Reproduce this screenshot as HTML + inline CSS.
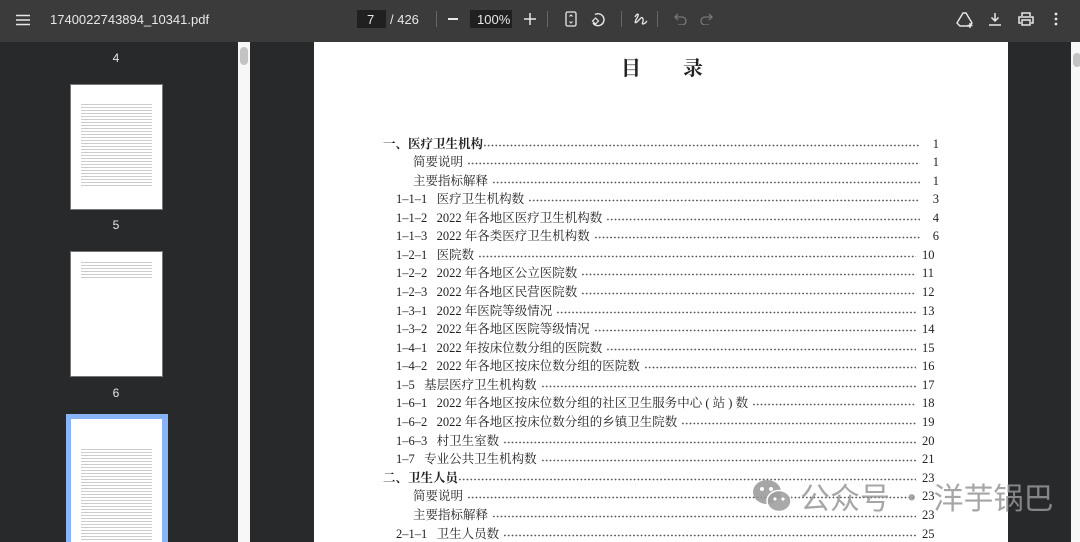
<!DOCTYPE html>
<html><head><meta charset="utf-8"><style>
*{margin:0;padding:0;box-sizing:border-box}
html,body{width:1080px;height:542px;overflow:hidden}
body{background:#28292b;font-family:"Liberation Sans",sans-serif;position:relative}
.tb{position:absolute;left:0;top:0;width:1080px;height:42px;background:#3b3b3b;color:#e8e8e8;font-size:13px}
.tb .t{position:absolute;top:12px}
.ic{position:absolute;top:11px}
.side{position:absolute;left:0;top:42px;width:238px;height:500px;background:#28292b}
.sb{position:absolute;left:238px;top:42px;width:12px;height:500px;background:#f7f7f7}
.sb i{position:absolute;left:2px;top:5px;width:8px;height:18px;border-radius:4px;background:#c3c3c3}
.rsb{position:absolute;left:1071px;top:42px;width:9px;height:500px;background:#f7f7f7}
.rsb i{position:absolute;left:2px;top:11px;width:8px;height:14px;border-radius:4px;background:#c3c3c3}
.lbl{position:absolute;color:#e8e8e8;font-size:12px;width:30px;text-align:center}
.th{position:absolute;background:#fff;border:1px solid #777}
.page{position:absolute;left:314px;top:42px;width:694px;height:500px;background:#fff;font-family:"Liberation Serif","Noto Serif CJK SC",serif;color:#222}
.title{position:absolute;left:307px;top:10px;font-size:20px;letter-spacing:42px;font-weight:bold;font-family:"Noto Serif CJK SC",serif}
.r{position:absolute;height:18px;display:flex;align-items:flex-end;font-size:12.5px;line-height:18px;right:69px}
.r .d{flex:1;height:5px;margin:0 5px 5px 4px;background:radial-gradient(circle,#555 0.7px,transparent 1px) 0 0/3.8px 5px repeat-x}
.r .n{width:14px;text-align:right}
.r .n2{width:18px;text-align:left;padding-left:1px}
.wm{position:absolute;left:752px;top:476px;color:rgba(150,150,150,.85);font-family:"Noto Sans CJK SC",sans-serif;font-size:30px;line-height:40px}
</style></head><body>
<div class="tb">
<svg class="ic" style="left:16px;top:14px" width="14" height="12"><path d="M0 1.5h14M0 6h14M0 10.5h14" stroke="#e8e8e8" stroke-width="1.5"/></svg>
<div class="t" style="left:50px">1740022743894_10341.pdf</div>
<div style="position:absolute;left:357px;top:10px;width:29px;height:18px;background:#202020"></div>
<div class="t" style="left:367px">7</div>
<div class="t" style="left:390px">/ 426</div>
<div style="position:absolute;left:436px;top:11px;width:1px;height:16px;background:#666"></div>
<div style="position:absolute;left:448px;top:18px;width:10px;height:1.5px;background:#e8e8e8"></div>
<div style="position:absolute;left:470px;top:10px;width:42px;height:18px;background:#202020"></div>
<div class="t" style="left:477px">100%</div>
<svg class="ic" style="left:524px;top:13px" width="12" height="12"><path d="M6 0v12M0 6h12" stroke="#e8e8e8" stroke-width="1.5"/></svg>
<div style="position:absolute;left:547px;top:11px;width:1px;height:16px;background:#666"></div>
<svg class="ic" style="left:565px" width="12" height="16"><rect x="1" y="1" width="10" height="14" rx="1.5" fill="none" stroke="#e8e8e8" stroke-width="1.3"/><path d="M4.5 5.5l1.5-1.5 1.5 1.5M4.5 10.5l1.5 1.5 1.5-1.5" stroke="#e8e8e8" fill="none"/></svg>
<svg class="ic" style="left:590px" width="16" height="16"><path d="M5 3.5A6 6 0 1 1 3 12" fill="none" stroke="#e8e8e8" stroke-width="1.4"/><path d="M5.5 7L2.5 10 5.5 13 8.5 10z" fill="none" stroke="#e8e8e8" stroke-width="1.2"/></svg>
<div style="position:absolute;left:621px;top:11px;width:1px;height:16px;background:#666"></div>
<svg class="ic" style="left:633px" width="16" height="16"><path d="M2 6c2-4 5-4 2 1s-2 6 1 3 4-5 5-2-2 5 0 5 3-2 4-3" fill="none" stroke="#e8e8e8" stroke-width="1.3"/></svg>
<div style="position:absolute;left:657px;top:11px;width:1px;height:16px;background:#666"></div>
<svg class="ic" style="left:674px;top:13px" width="13" height="12"><path d="M4 1L1 4l3 3M1 4h7a4 4 0 0 1 0 8H4" fill="none" stroke="#777" stroke-width="1.3"/></svg>
<svg class="ic" style="left:700px;top:13px" width="13" height="12"><path d="M9 1l3 3-3 3M12 4H5a4 4 0 0 0 0 8h4" fill="none" stroke="#777" stroke-width="1.3"/></svg>
<svg class="ic" style="left:956px" width="18" height="18"><path d="M7 2h3l6 10-2 3H4L1 12z" fill="none" stroke="#e8e8e8" stroke-width="1.4"/><path d="M14 12v5M11.5 14.5h5" stroke="#e8e8e8" stroke-width="1.4"/></svg>
<svg class="ic" style="left:988px;top:12px" width="14" height="14"><path d="M7 1v8M3.5 5.5L7 9l3.5-3.5M1 13h12" fill="none" stroke="#e8e8e8" stroke-width="1.5"/></svg>
<svg class="ic" style="left:1018px;top:12px" width="16" height="14"><path d="M4 4V1h8v3M3 11H1V5h14v6h-2M4 8h8v5H4z" fill="none" stroke="#e8e8e8" stroke-width="1.5"/></svg>
<svg class="ic" style="left:1054px;top:12px" width="4" height="14"><circle cx="2" cy="2" r="1.4" fill="#e8e8e8"/><circle cx="2" cy="7" r="1.4" fill="#e8e8e8"/><circle cx="2" cy="12" r="1.4" fill="#e8e8e8"/></svg>
</div>
<div class="side">
<div class="lbl" style="left:101px;top:9px">4</div>
<div class="th" style="left:70px;top:42px;width:93px;height:126px"><div style="margin:17px 10px 0;height:85px;background:repeating-linear-gradient(#fff 0 2px,#ccc 2px 3px)"></div></div>
<div class="lbl" style="left:101px;top:176px">5</div>
<div class="th" style="left:70px;top:209px;width:93px;height:126px"><div style="margin:8px 10px 0;height:20px;background:repeating-linear-gradient(#fff 0 2px,#ccc 2px 3px)"></div></div>
<div class="lbl" style="left:101px;top:344px">6</div>
<div style="position:absolute;left:66px;top:372px;width:102px;height:140px;background:#8ab4f8"></div>
<div class="th" style="left:71px;top:377px;width:91px;height:130px;border:none"><div style="margin:28px 10px 0;height:95px;background:repeating-linear-gradient(#fff 0 2px,#ccc 2px 3px)"></div></div>
</div>
<div class="sb"><i></i></div>
<div class="rsb"><i></i></div>
<div class="page">
<div class="title">目录</div>
<div class="r" style="left:69px;top:93px"><span style="font-weight:bold">一、医疗卫生机构</span><span class="d" style="margin-left:0"></span><span class="n">1</span></div>
<div class="r" style="left:99px;top:111px"><span>简要说明</span><span class="d"></span><span class="n">1</span></div>
<div class="r" style="left:99px;top:130px"><span>主要指标解释</span><span class="d"></span><span class="n">1</span></div>
<div class="r" style="left:82px;top:148px"><span>1–1–1&nbsp;&nbsp;&nbsp;医疗卫生机构数</span><span class="d"></span><span class="n">3</span></div>
<div class="r" style="left:82px;top:167px"><span>1–1–2&nbsp;&nbsp;&nbsp;2022 年各地区医疗卫生机构数</span><span class="d"></span><span class="n">4</span></div>
<div class="r" style="left:82px;top:185px"><span>1–1–3&nbsp;&nbsp;&nbsp;2022 年各类医疗卫生机构数</span><span class="d"></span><span class="n">6</span></div>
<div class="r" style="left:82px;top:204px"><span>1–2–1&nbsp;&nbsp;&nbsp;医院数</span><span class="d"></span><span class="n2">10</span></div>
<div class="r" style="left:82px;top:222px"><span>1–2–2&nbsp;&nbsp;&nbsp;2022 年各地区公立医院数</span><span class="d"></span><span class="n2">11</span></div>
<div class="r" style="left:82px;top:241px"><span>1–2–3&nbsp;&nbsp;&nbsp;2022 年各地区民营医院数</span><span class="d"></span><span class="n2">12</span></div>
<div class="r" style="left:82px;top:260px"><span>1–3–1&nbsp;&nbsp;&nbsp;2022 年医院等级情况</span><span class="d"></span><span class="n2">13</span></div>
<div class="r" style="left:82px;top:278px"><span>1–3–2&nbsp;&nbsp;&nbsp;2022 年各地区医院等级情况</span><span class="d"></span><span class="n2">14</span></div>
<div class="r" style="left:82px;top:297px"><span>1–4–1&nbsp;&nbsp;&nbsp;2022 年按床位数分组的医院数</span><span class="d"></span><span class="n2">15</span></div>
<div class="r" style="left:82px;top:315px"><span>1–4–2&nbsp;&nbsp;&nbsp;2022 年各地区按床位数分组的医院数</span><span class="d"></span><span class="n2">16</span></div>
<div class="r" style="left:82px;top:334px"><span>1–5&nbsp;&nbsp;&nbsp;基层医疗卫生机构数</span><span class="d"></span><span class="n2">17</span></div>
<div class="r" style="left:82px;top:352px"><span>1–6–1&nbsp;&nbsp;&nbsp;2022 年各地区按床位数分组的社区卫生服务中心 ( 站 ) 数</span><span class="d"></span><span class="n2">18</span></div>
<div class="r" style="left:82px;top:371px"><span>1–6–2&nbsp;&nbsp;&nbsp;2022 年各地区按床位数分组的乡镇卫生院数</span><span class="d"></span><span class="n2">19</span></div>
<div class="r" style="left:82px;top:390px"><span>1–6–3&nbsp;&nbsp;&nbsp;村卫生室数</span><span class="d"></span><span class="n2">20</span></div>
<div class="r" style="left:82px;top:408px"><span>1–7&nbsp;&nbsp;&nbsp;专业公共卫生机构数</span><span class="d"></span><span class="n2">21</span></div>
<div class="r" style="left:69px;top:427px"><span style="font-weight:bold">二、卫生人员</span><span class="d" style="margin-left:0"></span><span class="n2">23</span></div>
<div class="r" style="left:99px;top:445px"><span>简要说明</span><span class="d"></span><span class="n2">23</span></div>
<div class="r" style="left:99px;top:464px"><span>主要指标解释</span><span class="d"></span><span class="n2">23</span></div>
<div class="r" style="left:82px;top:483px"><span>2–1–1&nbsp;&nbsp;&nbsp;卫生人员数</span><span class="d"></span><span class="n2">25</span></div>
</div>
<div class="wm">
<svg style="position:absolute;left:0;top:3px" width="40" height="34"><ellipse cx="15" cy="13" rx="14" ry="12" fill="rgba(150,150,150,.85)"/><ellipse cx="27" cy="22" rx="12" ry="10.5" fill="rgba(160,160,160,.9)" stroke="#fff" stroke-width="1.5"/><circle cx="10" cy="10" r="2" fill="#fff"/><circle cx="19" cy="10" r="2" fill="#fff"/><circle cx="23" cy="20" r="1.6" fill="#fff"/><circle cx="31" cy="20" r="1.6" fill="#fff"/></svg>
<span style="position:absolute;left:48px;top:0;white-space:nowrap">公众号 · 洋芋锅巴</span>
</div>
</body></html>
